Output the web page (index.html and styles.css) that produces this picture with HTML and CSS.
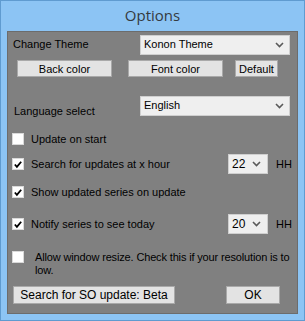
FILE: index.html
```html
<!DOCTYPE html>
<html lang="en">
  <head>
    <meta charset="UTF-8" />
    <meta name="viewport" content="width=device-width, initial-scale=1.0" />
    <title>Options</title>

    <link rel="stylesheet" href="styles.css">
  </head>
  <body>
    <div class="window">
      <div class="title">Options</div>

      <div class="panel">
        <div class="row row-theme">
          <span class="label">Change Theme</span>
          <div class="combo combo-wide">
            <span>Konon Theme</span>
            <svg class="chev" width="9" height="6" viewBox="0 0 9 6"><polyline points="1,1 4.5,4.5 8,1" /></svg>
          </div>
        </div>

        <div class="row row-colors">
          <button class="btn btn-back">Back color</button>
          <button class="btn btn-font">Font color</button>
          <button class="btn btn-default">Default</button>
        </div>

        <div class="row row-lang">
          <span class="label label-low">Language select</span>
          <div class="combo combo-wide">
            <span>English</span>
            <svg class="chev" width="9" height="6" viewBox="0 0 9 6"><polyline points="1,1 4.5,4.5 8,1" /></svg>
          </div>
        </div>

        <div class="row row-check r-start">
          <span class="box"></span>
          <span class="label">Update on start</span>
        </div>

        <div class="row row-check r-search">
          <span class="box">
            <svg width="11" height="11" viewBox="0 0 11 11"><polyline points="2,5.5 4.3,8 9,2.5" /></svg>
          </span>
          <span class="label">Search for updates at x hour</span>
          <div class="combo combo-hour">
            <span>22</span>
            <svg class="chev" width="9" height="6" viewBox="0 0 9 6"><polyline points="1,1 4.5,4.5 8,1" /></svg>
          </div>
          <span class="hh">HH</span>
        </div>

        <div class="row row-check r-show">
          <span class="box">
            <svg width="11" height="11" viewBox="0 0 11 11"><polyline points="2,5.5 4.3,8 9,2.5" /></svg>
          </span>
          <span class="label">Show updated series on update</span>
        </div>

        <div class="row row-check r-notify">
          <span class="box">
            <svg width="11" height="11" viewBox="0 0 11 11"><polyline points="2,5.5 4.3,8 9,2.5" /></svg>
          </span>
          <span class="label">Notify series to see today</span>
          <div class="combo combo-hour">
            <span>20</span>
            <svg class="chev" width="9" height="6" viewBox="0 0 9 6"><polyline points="1,1 4.5,4.5 8,1" /></svg>
          </div>
          <span class="hh">HH</span>
        </div>

        <div class="row r-resize">
          <span class="box"></span>
          <span class="label wrap">Allow window resize. Check this if your resolution is to low.</span>
        </div>

        <div class="row row-bottom">
          <button class="btn btn-so">Search for SO update: Beta</button>
          <button class="btn btn-ok">OK</button>
        </div>
      </div>
    </div>
  </body>
</html>
```

FILE: styles.css
```css
* {
  margin: 0;
  padding: 0;
  box-sizing: border-box;
}
body {
  background-color: #8cc4f4;
  font-family: "Liberation Sans", Arial, sans-serif;
  font-size: 11px;
  color: #000;
}

.window {
  width: 305px;
  height: 321px;
  border: 1px solid #5f9bd0;
  background-color: #8cc4f4;
}

.title {
  height: 30px;
  text-align: center;
  font-family: "Open Sans", "Noto Sans", sans-serif;
  font-size: 15px;
  line-height: 29px;
  color: #353a40;
}

.panel {
  margin-left: 6px;
  width: 291px;
  height: 283px;
  background-color: #808080;
  border: 1px solid #6c6c6c;
  padding: 3px 0 0 5px;
}

.row {
  display: flex;
  align-items: center;
}

.row-theme {
  height: 20px;
}
.row-theme .label {
  margin-top: -3px;
}

.combo {
  display: flex;
  align-items: center;
  justify-content: space-between;
  height: 20px;
  background-color: #efefef;
  border: 1px solid #cfcfcf;
  padding: 0 5px 0 3px;
}
.combo-wide {
  width: 150px;
  margin-left: auto;
  margin-right: 7px;
}
.combo-wide span {
  margin-top: -2px;
}
.chev polyline {
  fill: none;
  stroke: #5a5a5a;
  stroke-width: 1.6;
}

.row-colors {
  height: 17px;
  margin-top: 5px;
}
.btn {
  height: 17px;
  background-color: #e3e3e3;
  border: 1px solid #a9a9a9;
  font-family: "Liberation Sans", Arial, sans-serif;
  font-size: 11px;
  color: #000;
}
.btn-back {
  width: 95px;
  margin-left: 4px;
}
.btn-font {
  width: 95px;
  margin-left: 16px;
}
.btn-default {
  width: 43px;
  margin-left: 12px;
}

.row-lang {
  height: 21px;
  margin-top: 18px;
}
.label-low {
  align-self: flex-end;
  margin-left: 1px;
  margin-bottom: -1px;
}

.row-check {
  height: 20px;
}
.r-start {
  margin-top: 13px;
}
.r-search {
  margin-top: 5px;
}
.r-show {
  margin-top: 8px;
}
.r-notify {
  margin-top: 12px;
}

.box {
  display: flex;
  align-items: center;
  justify-content: center;
  width: 12px;
  height: 12px;
  background-color: #fff;
  border: 1px solid #d9d9d9;
  margin-left: -1px;
  margin-right: 7px;
  flex: none;
}
.box polyline {
  fill: none;
  stroke: #000;
  stroke-width: 2;
}

.combo-hour {
  width: 40px;
  margin-left: auto;
  padding: 0 6px 0 3px;
}
.combo-hour span {
  font-size: 12px;
}
.hh {
  width: 17px;
  margin-left: 8px;
  margin-right: 4px;
}

.r-resize {
  align-items: flex-start;
  margin-top: 17px;
}
.r-resize .box {
  margin-top: 0;
  margin-right: 11px;
}
.wrap {
  width: 261px;
  line-height: 13px;
  letter-spacing: -0.15px;
}

.row-bottom {
  margin-top: 9px;
}
.btn-so {
  width: 162px;
  height: 18px;
  font-size: 12px;
}
.btn-ok {
  width: 54px;
  height: 18px;
  margin-left: 51px;
  font-size: 12px;
}
```
